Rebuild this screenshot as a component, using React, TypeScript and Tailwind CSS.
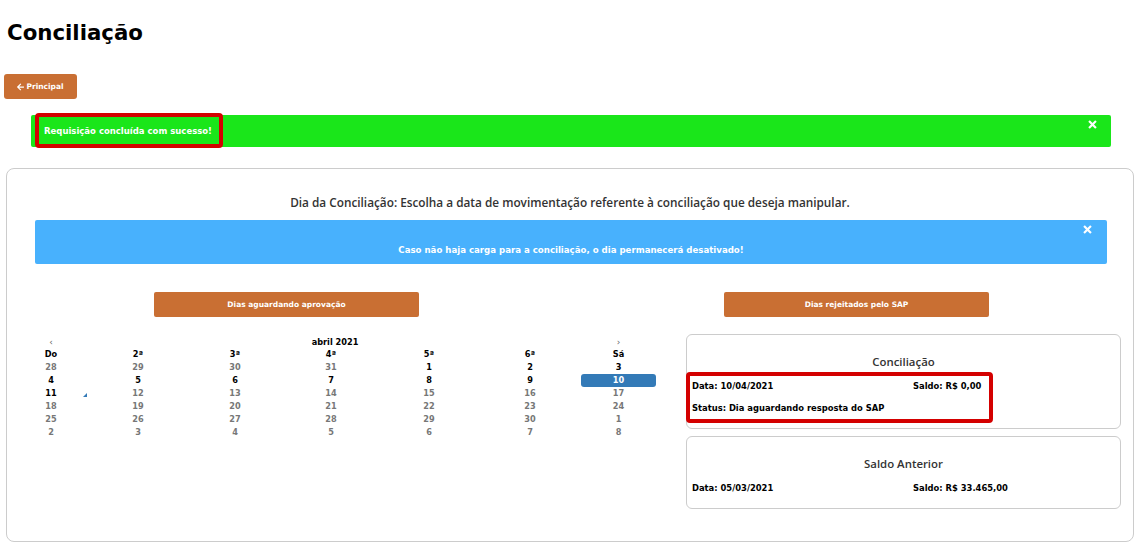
import React from 'react';

const sans = "font-['Open_Sans',sans-serif]";
const mont = "font-['DejaVu_Sans',sans-serif]";

type Day = { n: number; tone: 'muted' | 'on' | 'sel' | 'today' };

const weeks: Day[][] = [
  [28, 29, 30, 31].map(n => ({ n, tone: 'muted' as const })).concat([1, 2, 3].map(n => ({ n, tone: 'on' as const }))),
  [4, 5, 6, 7, 8, 9].map(n => ({ n, tone: 'on' as const })).concat([{ n: 10, tone: 'sel' as const }]),
  [{ n: 11, tone: 'today' as const }].concat([12, 13, 14, 15, 16, 17].map(n => ({ n, tone: 'muted' as const }))),
  [18, 19, 20, 21, 22, 23, 24].map(n => ({ n, tone: 'muted' as const })),
  [25, 26, 27, 28, 29, 30, 1].map(n => ({ n, tone: 'muted' as const })),
  [2, 3, 4, 5, 6, 7, 8].map(n => ({ n, tone: 'muted' as const })),
];

const dows = ['Do', '2ª', '3ª', '4ª', '5ª', '6ª', 'Sá'];

const Close = ({ className }: { className: string }) => (
  <svg viewBox="0 0 10 10" className={className}>
    <path d="M2 2 L8 8 M8 2 L2 8" stroke="white" strokeWidth="2.4" strokeLinecap="square" />
  </svg>
);

const ArrowLeft = () => (
  <svg viewBox="0 0 448 512" className="w-[7px] h-[8px]" fill="white">
    <path d="M257.5 445.1l-22.2 22.2c-9.4 9.4-24.6 9.4-33.9 0L7 273c-9.4-9.4-9.4-24.6 0-33.9L201.4 44.7c9.4-9.4 24.6-9.4 33.9 0l22.2 22.2c9.5 9.5 9.3 25-.4 34.3L136.6 216H424c13.3 0 24 10.7 24 24v32c0 13.3-10.7 24-24 24H136.6l120.5 114.8c9.8 9.3 10 24.8.4 34.3z" />
  </svg>
);

const cols = 'grid grid-cols-[76px_98px_96px_96px_100px_102px_75px] h-[13px] leading-[13px] text-center';

const Calendar = () => (
  <div className={`w-[643px] ${mont} text-[8.2px] font-bold`}>
    <div className="grid grid-cols-[76px_492px_75px] h-[12px] leading-[12px] text-center">
      <span className="text-[#666] text-[9px] font-normal">‹</span>
      <span className="text-black font-semibold">abril 2021</span>
      <span className="text-[#666] text-[9px] font-normal">›</span>
    </div>
    <div className={`${cols} text-black`}>
      {dows.map(d => <span key={d}>{d}</span>)}
    </div>
    {weeks.map((w, i) => (
      <div key={i} className={cols}>
        {w.map((d, j) => (
          <span
            key={j}
            className={
              d.tone === 'sel'
                ? 'bg-[#337ab7] text-white rounded-[3px]'
                : d.tone === 'muted'
                ? 'text-[#777]'
                : d.tone === 'today'
                ? 'relative text-black'
                : 'text-black'
            }
          >
            {d.n}
            {d.tone === 'today' && (
              <span className="absolute right-[2px] bottom-[3px] w-0 h-0 border-l-[4px] border-l-transparent border-b-[4px] border-b-[#337ab7]" />
            )}
          </span>
        ))}
      </div>
    ))}
  </div>
);

const App: React.FC = () => {
  return (
    <div className="w-[1137px] h-[547px] bg-white overflow-hidden">
      <h1 className={`${mont} text-[21.3px] font-bold text-black leading-[28px] pt-[19px] pl-[7px]`}>Conciliação</h1>

      <button className={`ml-[4px] mt-[27px] w-[73px] h-[25px] rounded-[3px] bg-[#c96f33] text-white text-[7.5px] font-bold ${mont} flex items-center justify-center gap-[2px]`}>
        <ArrowLeft />
        Principal
      </button>

      {/* success alert */}
      <div className="relative ml-[31px] mr-[26px] mt-[16px] h-[32px] bg-[#1ae61a] rounded-[2px] flex items-center pl-[13px] pt-[1px]">
        <span className={`${mont} text-white text-[8.5px] font-bold`}>Requisição concluída com sucesso!</span>
        <Close className="absolute right-[14px] top-[5px] w-[9px] h-[9px]" />
        <div className="absolute left-[4px] -top-[2px] w-[188px] h-[35px] border-[4px] border-[#d40000] rounded-[4px]" />
      </div>

      {/* main card */}
      <div className="ml-[6px] mr-[3px] mt-[21px] h-[374px] border border-[#ccc] rounded-[8px]">
        <p className={`${sans} text-center text-[11.8px] font-semibold text-[#333] pt-[25px] leading-[17px]`}>
          Dia da Conciliação: Escolha a data de movimentação referente à conciliação que deseja manipular.
        </p>

        <div className="relative ml-[28px] mr-[26px] mt-[9px] h-[44px] bg-[#48b1fd] rounded-[2px] flex items-end justify-center pb-[7px]">
          <span className={`${mont} text-white text-[8.6px] font-bold`}>Caso não haja carga para a conciliação, o dia permanecerá desativado!</span>
          <Close className="absolute right-[15px] top-[5px] w-[9px] h-[9px]" />
        </div>

        <div className="flex mt-[28px]">
          <button className={`ml-[147px] w-[265px] h-[25px] rounded-[2px] bg-[#c96f33] text-white text-[7.5px] font-bold ${mont}`}>
            Dias aguardando aprovação
          </button>
          <button className={`ml-[305px] w-[265px] h-[25px] rounded-[2px] bg-[#c96f33] text-white text-[7.5px] font-bold ${mont}`}>
            Dias rejeitados pelo SAP
          </button>
        </div>

        <div className="flex mt-[16px] ml-[6px]">
          <div className="mt-[3px]">
            <Calendar />
          </div>

          <div className="ml-[30px] mt-[1px] w-[435px] flex flex-col gap-[7px]">
            <div className="relative h-[95px] border border-[#ccc] rounded-[6px] px-[5px]">
              <div className={`${sans} text-center text-[11.4px] font-semibold text-[#333] mt-[19px] h-[16px] leading-[16px]`}>Conciliação</div>
              <div className={`grid grid-cols-[221px_1fr] mt-[10px] h-[12px] leading-[12px] ${mont} text-[8.4px] font-semibold text-black`}>
                <span>Data: 10/04/2021</span>
                <span>Saldo: R$ 0,00</span>
              </div>
              <div className={`mt-[10px] h-[12px] leading-[12px] ${mont} text-[8.4px] font-semibold text-black`}>
                Status: Dia aguardando resposta do SAP
              </div>
              <div className="absolute -left-[1px] top-[37px] w-[307px] h-[51px] border-[4px] border-[#d40000] rounded-[4px]" />
            </div>

            <div className="h-[73px] border border-[#ccc] rounded-[6px] px-[5px]">
              <div className={`${sans} text-center text-[11.4px] font-semibold text-[#333] mt-[19px] h-[16px] leading-[16px]`}>Saldo Anterior</div>
              <div className={`grid grid-cols-[221px_1fr] mt-[10px] h-[12px] leading-[12px] ${mont} text-[8.4px] font-semibold text-black`}>
                <span>Data: 05/03/2021</span>
                <span>Saldo: R$ 33.465,00</span>
              </div>
            </div>
          </div>
        </div>
      </div>
    </div>
  );
};

export default App;
